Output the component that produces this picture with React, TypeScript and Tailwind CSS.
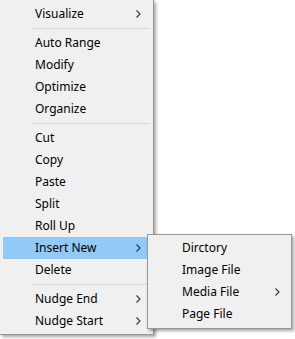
import React from "react";

type Item = { label: string; sub?: boolean; active?: boolean } | "sep";

const mainItems: Item[] = [
  { label: "Visualize", sub: true },
  "sep",
  { label: "Auto Range" },
  { label: "Modify" },
  { label: "Optimize" },
  { label: "Organize" },
  "sep",
  { label: "Cut" },
  { label: "Copy" },
  { label: "Paste" },
  { label: "Split" },
  { label: "Roll Up" },
  { label: "Insert New", sub: true, active: true },
  { label: "Delete" },
  "sep",
  { label: "Nudge End", sub: true },
  { label: "Nudge Start", sub: true },
];

const subItems = [
  { label: "Dirctory" },
  { label: "Image File" },
  { label: "Media File", sub: true },
  { label: "Page File" },
];

function Chevron() {
  return (
    <svg width="5" height="8" viewBox="0 0 5 8" className="shrink-0">
      <path d="M0.5 0.5 L4 4 L0.5 7.5" fill="none" stroke="#333" strokeWidth="1.1" />
    </svg>
  );
}

function SubMenu() {
  return (
    <div className="absolute left-[144px] top-[-3px] z-10 w-[145px] border border-[#979797] bg-[#f0f0f0] pt-[2px] pb-[3px] shadow-[2px_2px_3px_rgba(0,0,0,0.35)]">
      {subItems.map((it) => (
        <div key={it.label} className="ml-[2px] mr-[2px] flex h-[22px] items-center pl-[32px]">
          <span className="w-[93px]">{it.label}</span>
          {it.sub && <Chevron />}
        </div>
      ))}
    </div>
  );
}

export default function App() {
  return (
    <div className="h-[339px] w-[295px] bg-white font-['Noto_Sans',sans-serif] text-[12px] text-black">
      <div className="w-[154px] border-r border-b border-[#979797] bg-[#f0f0f0] pt-[3px] pb-[2px] shadow-[2px_2px_3px_rgba(0,0,0,0.35)]">
        {mainItems.map((it, i) =>
          it === "sep" ? (
            <div key={i} className="flex h-[7px] items-center">
              <div className="ml-[31px] h-px w-[119px] bg-[#d7d7d7]" />
            </div>
          ) : (
            <div
              key={i}
              className={
                "relative ml-[3px] flex h-[22px] w-[144px] items-center pl-[32px] " +
                (it.active ? "bg-[#91c9f7]" : "")
              }
            >
              <span className="w-[101px]">{it.label}</span>
              {it.sub && <Chevron />}
              {it.active && <SubMenu />}
            </div>
          )
        )}
      </div>
    </div>
  );
}
